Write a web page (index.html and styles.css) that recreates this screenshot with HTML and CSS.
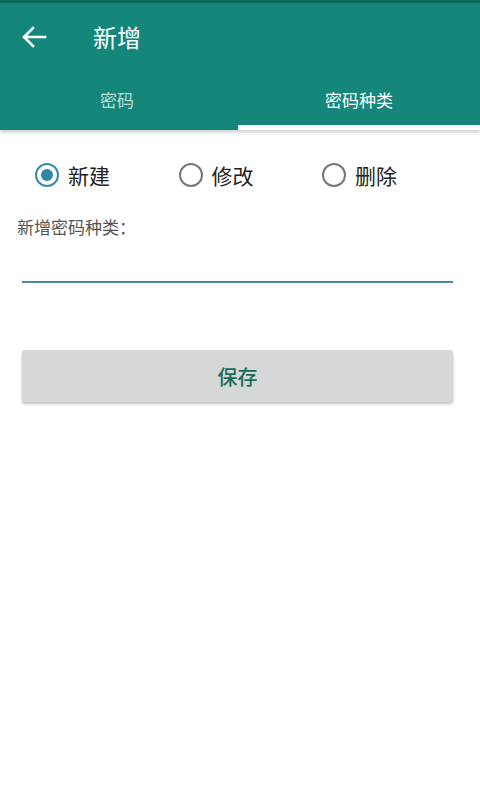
FILE: index.html
```html
<!DOCTYPE html>
<html lang="zh">
<head>
<meta charset="utf-8">
<link rel="stylesheet" href="styles.css">
</head>
<body>
<header class="appbar">
  <div class="status"></div>
  <div class="toolbar">
    <svg class="back" width="26" height="22" viewBox="0 0 26 22"><path d="M24 11H3M12 2L3 11l9 9" fill="none" stroke="#fff" stroke-width="2.6" stroke-linecap="square"/></svg>
    <span class="title">新增</span>
  </div>
  <nav class="tabs">
    <div class="tab">密码</div>
    <div class="tab active">密码种类</div>
  </nav>
</header>
<main class="content">
  <div class="radios">
    <label class="radio"><span class="circle checked"></span><span>新建</span></label>
    <label class="radio"><span class="circle"></span><span>修改</span></label>
    <label class="radio"><span class="circle"></span><span>删除</span></label>
  </div>
  <div class="label">新增密码种类：</div>
  <div class="input"></div>
  <button class="save">保存</button>
</main>
</body>
</html>
```
FILE: styles.css
```css
* { box-sizing: border-box; }
html, body { margin: 0; padding: 0; background: #fff; }
body {
  width: 480px;
  height: 800px;
  font-family: "Noto Sans CJK SC", "Noto Sans", sans-serif;
  overflow: hidden;
}
.appbar {
  background: #15877a;
  box-shadow: 0 2px 4px rgba(0,0,0,0.22);
  position: relative;
}
.status { height: 3px; background: #0c6a5d; }
.toolbar {
  height: 72px;
  display: flex;
  align-items: center;
  padding-left: 21px;
  padding-bottom: 5px;
}
.back { display: block; margin-top: 1px; }
.title {
  color: #fff;
  font-size: 24px;
  margin-left: 46px;
}
.tabs {
  display: flex;
  height: 55px;
}
.tab {
  display: flex;
  align-items: center;
  justify-content: center;
  color: rgba(255,255,255,0.72);
  font-size: 17px;
  padding-bottom: 2px;
  border-bottom: 5px solid transparent;
}
.tab:first-child { width: 238px; flex: none; padding-right: 4px; }
.tab.active {
  flex: 1;
  color: #fff;
  border-bottom-color: #fff;
}
.content { padding: 0 27px 0 17px; }
.radios {
  display: flex;
  padding: 31px 0 0 18px;
  height: 78px;
}
.radio {
  display: flex;
  align-items: center;
  gap: 9px;
  font-size: 21px;
  color: #222;
  width: 143.5px;
  flex: none;
  height: 28px;
}
.circle {
  width: 24px;
  height: 24px;
  border-radius: 50%;
  border: 2px solid #777;
  display: flex;
  align-items: center;
  justify-content: center;
  flex: none;
}
.circle.checked { border-color: #3b8aa6; }
.circle.checked::after {
  content: "";
  width: 12px;
  height: 12px;
  border-radius: 50%;
  background: #2e87ae;
}
.label {
  font-size: 17px;
  color: #555;
  margin-top: 7px;
  line-height: 24px;
}
.input {
  margin: 24px 0 0 5px;
  height: 20px;
  border-bottom: 2px solid #4a8c9c;
}
.save {
  display: block;
  width: 431px;
  height: 52px;
  margin: 67px 0 0 5px;
  border: none;
  border-radius: 3px;
  background: #d5d8d7;
  color: #1b6b5c;
  font-family: inherit;
  font-size: 20px;
  font-weight: 500;
  box-shadow: 0 2px 3px rgba(0,0,0,0.25);
}
```
